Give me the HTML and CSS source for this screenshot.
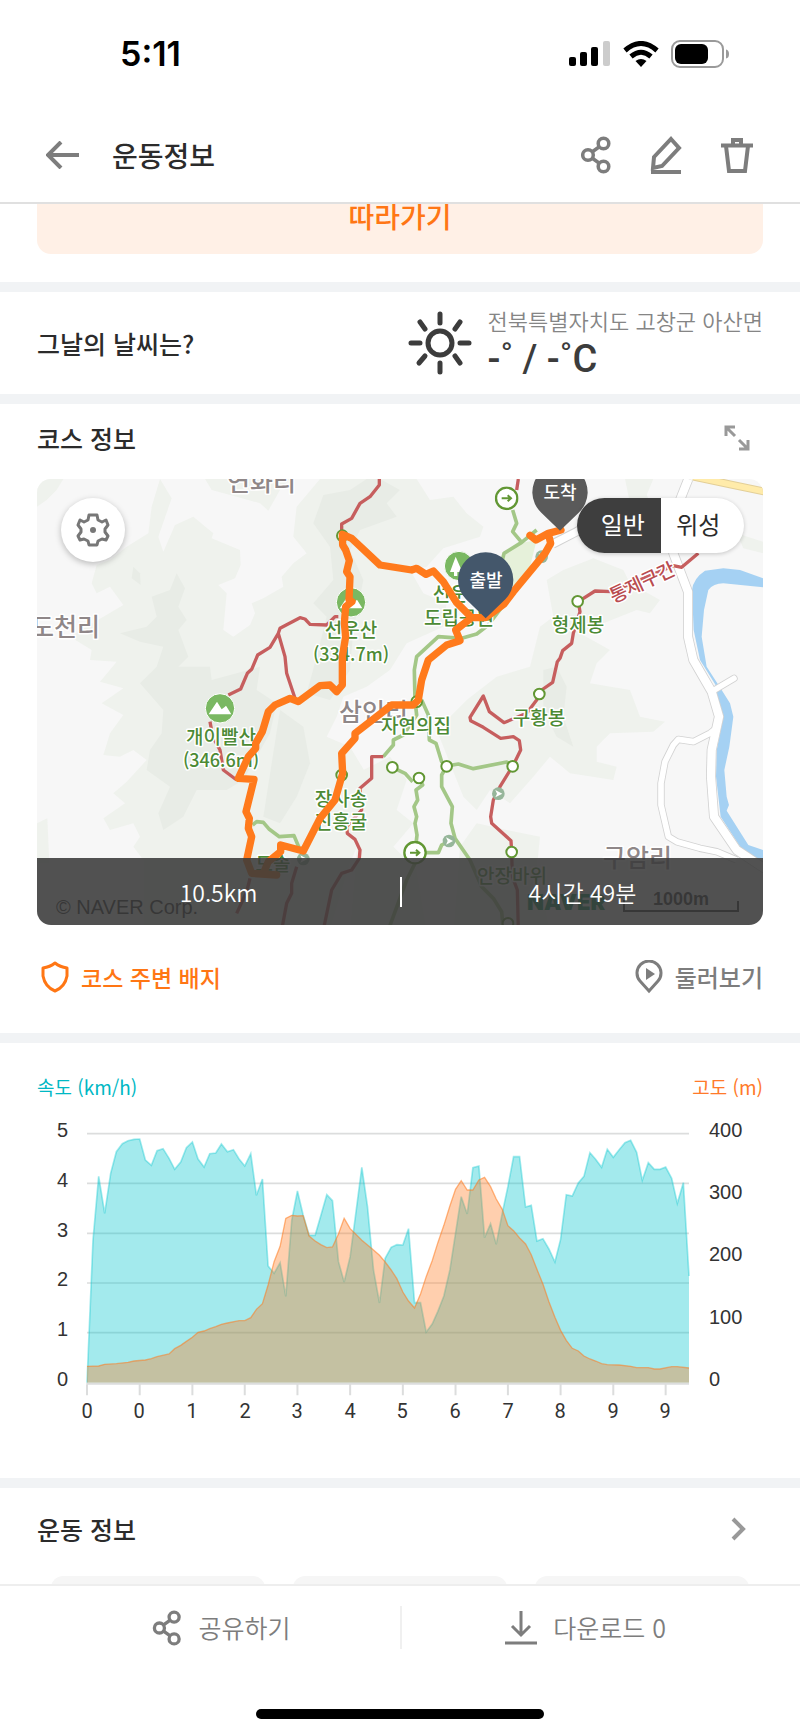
FILE: index.html
```html
<!DOCTYPE html>
<html lang="ko">
<head>
<meta charset="utf-8">
<meta name="viewport" content="width=device-width, initial-scale=1">
<title>운동정보</title>
<link rel="stylesheet" href="styles.css">
</head>
<body>
<svg class="defs" aria-hidden="true">
  <symbol id="share" viewBox="0 0 30 38">
    <g fill="none" stroke="currentColor" stroke-width="3.500">
      <circle cx="22.500" cy="7.500" r="5.300"/><circle cx="7" cy="19" r="5.300"/><circle cx="22.500" cy="30.500" r="5.300"/>
      <path d="M11 16l7-5M11 22l7 5"/>
    </g>
  </symbol>
  <symbol id="node" viewBox="-20 -20 40 40"><circle r="16" fill="#fff" stroke="#629734" stroke-width="6"/></symbol>
  <symbol id="arrow-node" viewBox="-36 -36 72 72">
    <circle r="32" fill="#fff" stroke="#629734" stroke-width="7"/>
    <path d="M-15 0H12M3-9l10 9-10 9" fill="none" stroke="#629734" stroke-width="6"/>
  </symbol>
  <symbol id="dot-node" viewBox="-22 -22 44 44">
    <circle r="19" fill="#96b69a"/><path d="M-9-11L12 0-9 11-4 0Z" fill="#fff"/>
  </symbol>
  <symbol id="peak" viewBox="-46 -46 92 92">
    <circle r="44" fill="#7ab862" stroke="#fff" stroke-width="3"/>
    <path d="M-34 18L-9-20 5 3 14-4 18-8 34 18Z" fill="#fff"/>
  </symbol>
</svg>

<header class="top">
  <div class="status">
    <span class="clock">5:11</span>
    <div class="indicators">
      <svg width="42" height="26" viewBox="0 0 42 26" aria-hidden="true"><rect y="16" width="7" height="9" rx="2"/><rect x="11" y="11" width="7" height="14" rx="2"/><rect x="22" y="6" width="7" height="19" rx="2"/><rect x="34" width="7" height="25" rx="2" fill="#ccc"/></svg>
      <svg width="36" height="26" viewBox="0 0 36 26" aria-hidden="true"><g fill="none" stroke="#000" stroke-width="5"><path d="M2 9.500Q18-4.500 34 9.500"/><path d="M8 15.500Q18 7 28 15.500"/></g><path d="M12.500 20Q18 16 23.500 20L18 26Z"/></svg>
      <svg width="59" height="28" viewBox="0 0 59 28" aria-hidden="true"><rect x="1" y="1" width="51" height="26" rx="8" fill="#fff" stroke="#9a9a9a" stroke-width="2"/><rect x="4" y="4" width="33" height="20" rx="6"/><path d="M55 9.500Q58 10 58 14T55 18.500Z" fill="#9a9a9a"/></svg>
    </div>
  </div>
  <div class="appbar">
    <button class="icon-btn" aria-label="뒤로"><svg width="34" height="28" viewBox="0 0 34 28"><path d="M15 1L2 14l13 13M2 14H33" fill="none" stroke="currentColor" stroke-width="4"/></svg></button>
    <h1>운동정보</h1>
    <nav class="actions">
      <button class="icon-btn" aria-label="공유"><svg width="30" height="38"><use href="#share"/></svg></button>
      <button class="icon-btn" aria-label="편집"><svg width="32" height="38" viewBox="0 0 32 38"><path d="M21 3l8 9-17 18-9 2 1-11Z" fill="none" stroke="currentColor" stroke-width="4"/><path d="M1 36H31" stroke="currentColor" stroke-width="4"/></svg></button>
      <button class="icon-btn" aria-label="삭제"><svg width="32" height="38" viewBox="0 0 32 38"><path d="M0 9.500H32M12 9V4H20V9M5 10l3 25H24l3-25" fill="none" stroke="currentColor" stroke-width="4"/></svg></button>
    </nav>
  </div>
</header>

<main>
  <div class="follow"><button class="follow-btn">따라가기</button></div>

  <section class="weather">
    <h2>그날의 날씨는?</h2>
    <div class="weather-now">
      <svg width="64" height="64" viewBox="-32 -32 64 64" fill="none" stroke="#3c3c3c" stroke-width="5" stroke-linecap="round" aria-hidden="true"><circle r="12"/><path d="M0-29V-20M0 20V29M-29 0H-20M20 0H29M-20-21l5 7M20-21l-5 7M-21 20l6-7M20 20l-5-7"/></svg>
      <div><p class="place">전북특별자치도 고창군 아산면</p><p class="temp">-˚ / -˚C</p></div>
    </div>
  </section>

  <section class="course">
    <div class="head">
      <h2>코스 정보</h2>
      <button class="icon-btn expand" aria-label="지도 확대"><svg width="26" height="26" viewBox="0 0 26 26"><path d="M2 11V2H11M2 2l9 9M24 15V24H15M24 24l-9-9" fill="none" stroke="currentColor" stroke-width="3"/></svg></button>
    </div>
    <div class="map">
      <svg class="map-art" viewBox="0 0 726 446" role="img" aria-label="코스 지도">
        <svg width="726" height="446" viewBox="21 27 2178 1338">
          <path d="M0 0H2220V1400H0Z" fill="#f7f7f7"/>
          <g fill="#eff2ed">
            <path d="M21 27H100L80 60 50 90 21 110Z"/>
            <path d="M390 27L425 85 385 200 400 245 435 165 490 140 550 190 545 205 630 240 632 285 615 325 565 345 590 370 580 480 610 500 660 465 675 430 665 400 700 385 760 350 755 320 790 280 830 250 790 200 800 110 870 27H1160L1200 90 1270 80 1310 130 1360 170 1350 200 1240 235 1190 290 1140 300 1180 370 1250 400 1240 470 1130 520 1080 600 1010 650 940 680 920 740 890 800 960 830 1020 930 1010 1060 960 1180 900 1380H340L340 1170 310 1130 330 1100 310 1060 240 1080 220 1045 285 1000 250 970 290 935 350 870 310 840 270 860 220 855 240 790 280 735 215 700 280 655 210 635 260 575 180 570 185 540 120 500 220 440 280 405 240 350 200 370 185 340 200 285 240 270 290 230 355 190 365 110Z"/>
            <path d="M525 27L545 60 620 80 690 100 715 122 750 60 780 27Z"/>
            <path d="M1550 330L1600 300 1690 265 1780 300 1800 340 1890 390 1860 430 1820 420 1720 460 1650 490 1740 540 1700 580 1680 640 1800 660 1830 740 1905 755 1870 785 1740 790 1700 830 1700 875 1760 890 1750 930 1620 910 1560 860 1510 920 1440 1000 1380 960 1340 1020 1300 980 1260 880 1220 780 1310 690 1400 620 1500 590 1530 470 1570 440Z"/>
            <path d="M1000 900L1080 860 1130 930 1100 1020 1150 1060 1090 1130 1160 1200 1190 1380H960Z"/>
            <path d="M1290 1130L1340 1060 1430 1080 1530 1100 1520 1200 1560 1380H1270Z"/>
            <path d="M1785 27H1870L1850 75 1870 120 1800 100Z"/><path d="M21 1060L52 1045 58 1180H21Z"/><path d="M2120 190L2199 215V250L2140 235Z"/>
          </g>
          <g fill="#e8ece6">
            <path d="M440 310L465 355 445 410 470 450 445 480 475 560 445 590 540 590 545 630 620 610 690 590 680 660 740 700 720 790 640 930 590 960 500 960 460 1040 400 1080 385 1030 420 950 350 900 360 840 395 790 400 720 330 640 380 590 400 530 330 515 270 490 350 470 380 440 365 380 420 360Z"/>
            <path d="M310 290L330 310 332 345 305 325Z"/>
            <path d="M880 75L960 60 1010 27H1050L1110 60 1070 100 1100 140 990 180 960 240 1000 330 970 480 960 600 900 690 830 670 860 560 890 440 850 400 910 330 900 230 850 160Z"/>
            <path d="M750 720L820 770 840 880 800 980 750 1060 700 1040Z"/>
            <path d="M1540 600L1580 590 1610 650 1600 740 1630 830 1580 800 1540 720Z"/>
          </g>
          <path d="M1420 250L1470 220 1520 210 1500 290 1450 350 1400 330Z" fill="#e6f1da"/>
          <path d="M2199 325L2130 300 2080 295 2025 302Q1990 325 1986 360L1991 480 2010 570 2060 650 2055 672 2080 740 2060 840 2058 920 2072 1040 2140 1145 2165 1165H2199V1140L2155 1125 2090 1022 2097 1005 2090 980 2083 900 2098 830 2110 740 2100 700 2075 660 2030 590 2015 500 2022 420 2035 360Q2050 340 2080 340L2199 352Z" fill="#a5d1f3"/>
          <g fill="none" stroke-linejoin="round">
            <g stroke="#d2d2d2">
              <path stroke-width="30" d="M1975 27L1950 90 1930 250 1974 365V500L1990 570 2045 665 2067 740 2045 840 2043 920 2052 1040 2120 1140 2210 1200"/>
              <path stroke-width="22" d="M2065 770L2040 790 1990 815 1945 808 1930 825 1905 875 1893 940V1005L1915 1100 1940 1115 2010 1135 2060 1145 2120 1170"/>
              <path stroke-width="22" stroke-linecap="round" d="M2045 665L2112 625"/><path stroke-width="28" d="M1568 222L1640 185 1720 140"/>
            </g>
            <g stroke="#fff">
              <path stroke-width="25" d="M1975 27L1950 90 1930 250 1974 365V500L1990 570 2045 665 2067 740 2045 840 2043 920 2052 1040 2120 1140 2210 1200"/>
              <path stroke-width="17" d="M2065 770L2040 790 1990 815 1945 808 1930 825 1905 875 1893 940V1005L1915 1100 1940 1115 2010 1135 2060 1145 2120 1170"/>
              <path stroke-width="17" stroke-linecap="round" d="M2045 665L2112 625"/><path stroke-width="22" d="M1568 222L1640 185 1720 140"/>
            </g>
            <path stroke="#e3cf98" stroke-width="24" d="M1990 20L2100 43 2210 66"/><path stroke="#ffebaa" stroke-width="18" d="M1990 20L2100 43 2210 66"/>
            <g stroke="#a3c787" stroke-width="11">
              <path d="M1448 120L1460 160 1448 185 1475 217 1422 250 1410 300M1475 217L1520 180M1530 260L1375 465 1340 492 1295 505 1225 500 1160 560 1153 600 1155 690 1160 735 1120 795 1090 810V825L1060 860"/>
              <path d="M1175 690L1195 735 1198 810 1218 820 1235 875 1250 888 1285 882 1330 896 1430 876 1448 888M1250 888L1235 915V950L1267 1010 1263 1060 1275 1105 1320 1170 1355 1250 1390 1285 1415 1325 1420 1380"/>
              <path d="M1087 892L1125 910 1148 935M1167 925L1178 945 1158 960 1163 990 1152 1010 1160 1040 1155 1060 1161 1095 1155 1148H1225L1235 1125 1257 1113M1155 1180L1130 1230 1075 1380M668 1065L680 1055 700 1057 718 1078 748 1100 792 1097 810 1140"/>
            </g>
            <g stroke="#c65e5e" stroke-width="10">
              <path d="M1048 27V45L1020 80 990 100 965 145 935 162V200M1465 27L1460 60M925 440H915L890 465 840 463 825 447 810 443 750 475 745 490 720 532 683 555 665 598 652 610 632 657 595 675M745 490L765 560 770 610 795 685M540 755L548 800 570 840 580 900 620 930"/>
              <path d="M2005 250L1955 292 1930 287 1745 365 1695 363 1645 395 1650 425 1630 490 1625 520 1598 542 1590 565 1582 575 1568 637 1535 660 1520 690 1490 730 1422 758 1378 725 1360 678 1320 742 1322 752 1360 772 1412 805 1450 800 1468 812 1472 840 1450 885 1410 950 1390 990 1382 1040 1385 1060 1443 1112 1445 1145 1447 1220 1462 1260 1465 1380"/>
              <path d="M1060 860H1025V925L990 955 995 1020 950 1070 952 1090 975 1108 990 1140 988 1165 965 1200 935 1210 905 1260 880 1380M800 1190L785 1240V1270L770 1300 755 1380M660 1225L650 1265 620 1330"/>
            </g>
          </g>
          <use href="#arrow-node" x="1394" y="49" width="72" height="72"/><use href="#arrow-node" x="1119" y="1112" width="72" height="72"/>
          <use href="#node" x="1623" y="374" width="40" height="40"/><use href="#node" x="1508" y="652" width="40" height="40"/>
          <use href="#node" x="1067" y="872" width="40" height="40"/><use href="#node" x="1147" y="904" width="40" height="40"/>
          <use href="#node" x="1230" y="869" width="40" height="40"/><use href="#node" x="1428" y="869" width="40" height="40"/>
          <use href="#node" x="1425" y="1126" width="40" height="40"/><use href="#node" x="915" y="895" width="40" height="40"/>
          <use href="#node" x="1140" y="675" width="40" height="40"/><use href="#node" x="917" y="177" width="40" height="40"/>
          <use href="#node" x="1414" y="1340" width="40" height="40"/>
          <use href="#dot-node" x="1383" y="949" width="44" height="44"/><use href="#dot-node" x="1235" y="1091" width="44" height="44"/>
          <use href="#dot-node" x="798" y="1145" width="44" height="44"/><use href="#dot-node" x="1513" y="238" width="44" height="44"/>
          <use href="#peak" x="524" y="669" width="92" height="92"/><use href="#peak" x="917" y="351" width="92" height="92"/>
          <circle cx="1287" cy="288" r="44" fill="#7ab862" stroke="#fff" stroke-width="3"/><path d="M1277 260L1297 306H1282V318H1272V306H1260Z" fill="#fff"/>
        </svg>
        <g class="lbl town">
          <text x="190" y="12">연화리</text><text x="63" y="157" text-anchor="end">도천리</text><text x="302" y="242">삼인리</text><text x="566" y="388">구암리</text>
        </g>
        <g class="lbl spot">
          <text x="314" y="158">선운산</text><text class="alt" x="314" y="182">(334.7m)</text>
          <text x="184" y="265">개이빨산</text><text class="alt" x="184" y="288">(346.6m)</text>
          <text x="422" y="122">선운산</text><text x="422" y="146">도립공원</text>
          <text x="379" y="254">자연의집</text><text x="304" y="327">장사송</text><text x="304" y="350">진흥굴</text>
          <text x="541" y="153">형제봉</text><text x="502" y="246">구황봉</text><text x="475" y="404">안장바위</text><text x="236" y="392">도솔</text>
        </g>
        <text class="lbl closed" x="606" y="110" transform="rotate(-25 606 105)">통제구간</text>
        <text class="copyright" x="19" y="435">© NAVER Corp.</text>
        <text class="brand" x="490" y="431">NAVER</text>
        <text class="scale" x="616" y="426">1000m</text>
        <path d="M587 421V432H701V422" fill="none" stroke="#222" stroke-width="2"/>
        <svg width="726" height="446" viewBox="21 27 2178 1338">
          <g fill="none" stroke="#ff7a1c" stroke-width="22" stroke-linejoin="round" stroke-linecap="round">
            <path d="M1593 180L1555 190 1518 210 1500 196M1555 190L1562 220 1545 250 1450 365 1422 402 1367 443H1325L1280 398 1240 335 1210 303 1188 313 1160 295 1145 300 1050 285 965 205 937 193 938 225 947 240 958 272 950 305 960 320 957 390 966 395 947 410 943 460 947 500 937 560V645L920 665 900 645 870 647 805 695 780 685 735 705 715 725 697 785 677 820V835L655 860 625 925 672 928 648 1025 658 1045 655 1075 665 1100 650 1170 665 1210 740 1215M700 1210L715 1175 752 1145V1125L820 1143 870 1045 915 990 938 910 935 850 975 805V790L1085 705H1150L1165 690 1175 630 1195 570 1250 525 1290 512 1277 480 1325 443"/>
          </g>
          <path d="M1590 182L1534 128A83 83 0 1 1 1646 128Z" fill="#5a5a5a"/>
          <path d="M1367 445L1308 388A83 83 0 1 1 1426 388Z" fill="#44576b"/>
        </svg>
        <g class="pin"><text x="523" y="20">도착</text><text x="449" y="108">출발</text></g>
      </svg>
      <button class="settings" aria-label="지도 설정"><svg width="34" height="34" viewBox="-17 -17 34 34" fill="none" stroke="#777" stroke-width="3" stroke-linejoin="round"><path d="M-4-15H4L5-10 9-8 13-10 15-5 12-1V2L15 6 13 10 9 9 5 11 4 15H-4L-5 11-9 9-13 10-15 6-12 2V-1L-15-5-13-10-9-8-5-10Z"/><circle r="3" fill="#777" stroke="none"/></svg></button>
      <div class="toggle"><button class="on" aria-pressed="true">일반</button><button aria-pressed="false">위성</button></div>
      <div class="summary"><span>10.5km</span><span>4시간 49분</span></div>
    </div>
    <div class="links">
      <a class="badge" href="#badges"><svg width="28" height="32" viewBox="0 0 28 32"><path d="M14 2Q19 6 26 7V15Q24 26 14 30Q4 26 2 15V7Q9 6 14 2Z" fill="none" stroke="currentColor" stroke-width="3" stroke-linejoin="round"/></svg>코스 주변 배지</a>
      <a class="tour" href="#tour"><svg width="28" height="34" viewBox="0 0 28 34"><path d="M14 31L5 21A12 12 0 1 1 23 21Z" fill="none" stroke="currentColor" stroke-width="3"/><path d="M11 8l9 6-9 6Z" fill="currentColor"/></svg>둘러보기</a>
    </div>
  </section>

  <section class="chart">
    <div class="legend"><span class="speed">속도 (km/h)</span><span class="height">고도 (m)</span></div>
    <svg class="plot" viewBox="0 0 726 377" role="img" aria-label="속도와 고도 그래프">
      <svg x="50" y="32" width="602" height="250" viewBox="172 69 1805 750" preserveAspectRatio="none" overflow="visible">
        <path d="M172 71H1977M172 220H1977M172 370H1977M172 519H1977M172 668H1977" stroke="#dcdddd" stroke-width="5"/>
        <path fill="#00c4cc" fill-opacity=".36" d="M172 818L190 390 207 199 225 310 243 190 260 125 278 101 295 92 313 88 330 87 347 150 365 166 382 122 400 116 418 145 435 178 453 156 470 113 488 96 505 147 523 171 540 131 558 129 575 102 593 125 611 119 628 147 645 168 663 131 680 256 698 207 715 468 733 490 751 458 768 559 786 330 803 243 820 315 838 376H856L873 317 891 254 908 272 926 455 943 516 961 440 978 310 996 172 1013 290 1031 480 1049 579 1066 445 1084 412 1101 404 1119 405 1136 356 1154 578H1172L1189 666 1207 642 1224 604 1242 558 1260 480 1277 370 1294 260 1312 312 1329 173 1347 168 1364 383 1382 341 1399 403 1417 310 1434 230 1451 140H1469L1487 291 1504 286 1521 393 1539 386 1557 417 1575 456 1592 388 1609 254 1627 258 1645 219 1662 199 1680 128 1697 148 1715 172 1732 118 1750 142 1767 120 1785 98 1802 91 1820 127 1837 211 1855 158 1873 178H1890L1907 171 1925 205 1942 280 1960 218 1977 498V818Z"/>
        <path fill="none" stroke="#00c4cc" stroke-opacity=".36" stroke-width="5" d="M172 818L190 390 207 199 225 310 243 190 260 125 278 101 295 92 313 88 330 87 347 150 365 166 382 122 400 116 418 145 435 178 453 156 470 113 488 96 505 147 523 171 540 131 558 129 575 102 593 125 611 119 628 147 645 168 663 131 680 256 698 207 715 468 733 490 751 458 768 559 786 330 803 243 820 315 838 376H856L873 317 891 254 908 272 926 455 943 516 961 440 978 310 996 172 1013 290 1031 480 1049 579 1066 445 1084 412 1101 404 1119 405 1136 356 1154 578H1172L1189 666 1207 642 1224 604 1242 558 1260 480 1277 370 1294 260 1312 312 1329 173 1347 168 1364 383 1382 341 1399 403 1417 310 1434 230 1451 140H1469L1487 291 1504 286 1521 393 1539 386 1557 417 1575 456 1592 388 1609 254 1627 258 1645 219 1662 199 1680 128 1697 148 1715 172 1732 118 1750 142 1767 120 1785 98 1802 91 1820 127 1837 211 1855 158 1873 178H1890L1907 171 1925 205 1942 280 1960 218 1977 498"/>
        <path fill="#ff7a1e" fill-opacity=".36" d="M172 818V769L207 768 225 763 260 761 295 757 313 753 347 750 365 746 382 740 418 732 435 716 453 706 470 694 488 682 505 667 523 663 540 656 558 650 575 643 593 639 628 632H645L663 623 680 598 698 581 715 525 733 455 751 409 768 325 786 316 803 318 820 317 838 378 856 393 873 404 891 413 908 411 926 372 943 325 961 356 978 373 996 391 1031 420 1049 436 1066 456 1084 480 1101 506 1119 546 1136 573 1154 594 1172 552 1189 500 1207 452 1224 398 1242 346 1260 288 1277 238 1294 212 1312 240H1329L1347 210 1364 202 1382 230 1399 267 1417 298 1434 347 1451 362 1469 384 1487 402 1504 434 1521 478 1539 522 1557 575 1575 622 1592 661 1609 691 1627 715 1645 723 1662 738 1680 747 1697 753 1715 761 1732 764 1767 765 1802 769 1820 773H1855L1873 777H1890L1925 770H1942L1977 774V818Z"/>
        <path fill="none" stroke="#ff7a1e" stroke-opacity=".55" stroke-width="4" d="M172 769L207 768 225 763 260 761 295 757 313 753 347 750 365 746 382 740 418 732 435 716 453 706 470 694 488 682 505 667 523 663 540 656 558 650 575 643 593 639 628 632H645L663 623 680 598 698 581 715 525 733 455 751 409 768 325 786 316 803 318 820 317 838 378 856 393 873 404 891 413 908 411 926 372 943 325 961 356 978 373 996 391 1031 420 1049 436 1066 456 1084 480 1101 506 1119 546 1136 573 1154 594 1172 552 1189 500 1207 452 1224 398 1242 346 1260 288 1277 238 1294 212 1312 240H1329L1347 210 1364 202 1382 230 1399 267 1417 298 1434 347 1451 362 1469 384 1487 402 1504 434 1521 478 1539 522 1557 575 1575 622 1592 661 1609 691 1627 715 1645 723 1662 738 1680 747 1697 753 1715 761 1732 764 1767 765 1802 769 1820 773H1855L1873 777H1890L1925 770H1942L1977 774"/>
        <path d="M170 821H1977M172 824V856M330 824V856M488 824V856M645 824V856M803 824V856M961 824V856M1119 824V856M1277 824V856M1434 824V856M1592 824V856M1750 824V856M1907 824V856" fill="none" stroke="#dcdddd" stroke-width="6"/>
      </svg>
      <g class="axis left"><text x="31" y="36">5</text><text x="31" y="86">4</text><text x="31" y="136">3</text><text x="31" y="185">2</text><text x="31" y="235">1</text><text x="31" y="285">0</text></g>
      <g class="axis"><text x="672" y="36">400</text><text x="672" y="98">300</text><text x="672" y="160">200</text><text x="672" y="223">100</text><text x="672" y="285">0</text></g>
      <g class="axis bottom"><text x="50" y="317">0</text><text x="102" y="317">0</text><text x="155" y="317">1</text><text x="208" y="317">2</text><text x="260" y="317">3</text><text x="313" y="317">4</text><text x="365" y="317">5</text><text x="418" y="317">6</text><text x="471" y="317">7</text><text x="523" y="317">8</text><text x="576" y="317">9</text><text x="628" y="317">9</text></g>
    </svg>
  </section>

  <section class="stats">
    <div class="head">
      <h2>운동 정보</h2>
      <button class="icon-btn more" aria-label="운동 정보 더보기"><svg width="16" height="24" viewBox="0 0 16 24"><path d="M3 2l10 10L3 22" fill="none" stroke="currentColor" stroke-width="4"/></svg></button>
    </div>
    <div class="cards"><div></div><div></div><div></div></div>
  </section>
</main>

<footer>
  <div class="bottom-actions">
    <button><svg width="32" height="36"><use href="#share"/></svg>공유하기</button>
    <button><svg width="34" height="36" viewBox="0 0 34 36"><path d="M17 1V25M8 16l9 9 9-9M1 33H33" fill="none" stroke="currentColor" stroke-width="3"/></svg>다운로드 0</button>
  </div>
  <div class="home"></div>
</footer>
</body>
</html>
```
FILE: styles.css
```css
* { box-sizing: border-box; }
body { margin: 0; background: #fff; color: #2b2b2b; font-family: "Noto Sans CJK KR", sans-serif; }
h1, h2, p { margin: 0; }
h1, h2 { font-weight: 500; }
h2 { font-size: 25px; line-height: 36px; }
button { margin: 0; padding: 0; border: 0; background: none; color: inherit; font: inherit; cursor: pointer; }
a { color: inherit; text-decoration: none; }
svg { display: block; }
.defs { position: absolute; width: 0; height: 0; }
.icon-btn { display: flex; color: #7d7d7d; }

.top { border-bottom: 2px solid #e0e0e0; }
.status { display: flex; align-items: center; justify-content: space-between; height: 108px; padding: 0 70px 0 120px; }
.clock { color: #000; font: 600 34px/40px Inter, sans-serif; }
.indicators { display: flex; align-items: center; gap: 12px; }
.appbar { display: flex; align-items: center; height: 94px; padding: 0 47px 0 46px; }
h1 { margin-left: 32px; font-size: 28px; line-height: 40px; }
.actions { display: flex; gap: 39px; margin-left: auto; }

.follow { overflow: hidden; padding: 0 37px 28px; }
.follow-btn { display: block; width: 100%; height: 74px; margin-top: -24px; padding-bottom: 2px; border-radius: 14px; background: #fff0e6; color: #ff7614; font-size: 28px; font-weight: 500; line-height: 40px; }

section { border-top: 10px solid #f1f3f5; padding-left: 37px; padding-right: 37px; }
.weather { display: flex; align-items: center; justify-content: space-between; height: 112px; }
.weather-now { display: flex; align-items: center; gap: 16px; }
.place { color: #858585; font-size: 22px; font-weight: 350; line-height: 32px; }
.temp { color: #3c3c3c; font: 500 38px/46px Roboto, sans-serif; }

.head { display: flex; align-items: center; justify-content: space-between; }
.course .head { padding: 16px 13px 23px 0; }
.expand, .more { color: #999; }
.map { position: relative; overflow: hidden; border-radius: 14px; }
.map-art { width: 100%; height: auto; }
.lbl { stroke: #fff; stroke-width: 3px; paint-order: stroke; stroke-linejoin: round; font-weight: 500; }
.town { fill: #8f8788; font-size: 25px; }
.spot { fill: #4c8a35; font-size: 19px; text-anchor: middle; }
.alt { font-size: 18px; }
.closed { fill: #b94c50; font-size: 19px; text-anchor: middle; }
.copyright { fill: #222; font: 20px "Liberation Sans", sans-serif; }
.brand { fill: #008a50; font: 900 22px Inter, sans-serif; }
.scale { fill: #222; font: bold 18px "Liberation Sans", sans-serif; }
.pin { fill: #fff; font-size: 18px; font-weight: 500; text-anchor: middle; }
.settings { position: absolute; left: 24px; top: 19px; display: grid; place-items: center; width: 64px; height: 64px; border-radius: 50%; background: #fff; box-shadow: 0 2px 6px rgba(0, 0, 0, .25); }
.toggle { position: absolute; right: 19px; top: 19px; display: flex; overflow: hidden; width: 167px; height: 55px; border-radius: 28px; background: #fff; box-shadow: 0 1px 4px rgba(0, 0, 0, .2); font-size: 24px; line-height: 52px; }
.toggle button { flex: 1; padding: 0 8px 3px 0; }
.toggle .on { padding: 0 0 3px 8px; background: #3e3e3e; color: #fff; }
.summary { position: absolute; left: 0; right: 0; bottom: 0; display: grid; grid-template-columns: 1fr 1fr; align-items: center; height: 67px; background: rgba(58, 58, 58, .88); color: #fff; font-size: 23px; font-weight: 350; line-height: 30px; text-align: center; }
.summary span + span { border-left: 2px solid #fff; }
.links { display: flex; justify-content: space-between; padding: 34px 0 38px 4px; font-size: 24px; font-weight: 500; line-height: 36px; }
.links a { display: flex; align-items: center; gap: 12px; }
.badge { color: #ff7614; font-size: 23px; }
.tour { color: #7d7d7d; }

.legend { display: flex; justify-content: space-between; padding-top: 30px; font-size: 19px; line-height: 28px; }
.speed { color: #00b8c4; }
.height { color: #ff7a2a; }
.plot { width: 100%; height: auto; }
.axis { fill: #333; font: 20px "Liberation Sans", sans-serif; }
.left { text-anchor: end; }
.bottom { font-family: Roboto, sans-serif; text-anchor: middle; }

.stats .head { padding: 23px 17px 29px 0; }
.cards { display: grid; grid-template-columns: repeat(3, 1fr); gap: 28px; overflow: hidden; height: 8px; padding: 0 14px; }
.cards div { height: 90px; border-radius: 12px; background: #f6f6f6; }

footer { border-top: 2px solid #eee; }
.bottom-actions { display: grid; grid-template-columns: 1fr 1fr; padding: 20px 0 60px; color: #7d7d7d; font-size: 25px; font-weight: 350; line-height: 43px; }
.bottom-actions button { display: flex; align-items: center; justify-content: center; gap: 15px; }
.bottom-actions button:first-child { padding-left: 42px; }
.bottom-actions button + button { border-left: 2px solid #f0f0f0; padding-right: 32px; }
.home { width: 36%; height: 10px; margin: 0 auto 15px; border-radius: 5px; background: #000; }
```
